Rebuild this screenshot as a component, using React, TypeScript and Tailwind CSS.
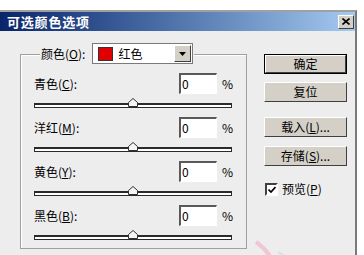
import React from 'react';

const font = { fontFamily: '"Noto Sans CJK SC", "Liberation Sans", sans-serif' };

const Thumb = () => (
  <svg width="10" height="9" viewBox="0 0 10 9" className="absolute left-[94px] top-0">
    <path d="M5 0.5 L9.5 4.5 L9.5 8.5 L0.5 8.5 L0.5 4.5 Z" fill="#f4f4f4" stroke="#303030" strokeWidth="1" />
  </svg>
);

const Row = ({ label, mnemonic }: { label: string; mnemonic: string }) => (
  <div className="flex flex-col">
    <div className="flex h-[21px] items-center">
      <span className="w-[145px] text-[12px] text-black">
        {label}(<span className="underline">{mnemonic}</span>):
      </span>
      <div className="flex h-[21px] w-[38px] items-center border-t-2 border-l-2 border-t-[#5a5a5a] border-l-[#5a5a5a] border-b border-r border-b-white border-r-white bg-white pl-[1px] text-[12px] leading-none">
        0
      </div>
      <span className="ml-[5px] text-[12px]">%</span>
    </div>
    <div className="relative mt-[4px] h-[10px] w-[198px]">
      <div className="absolute left-0 right-0 top-[5px] h-[5px] border border-t-2 border-[#2a2a2a] bg-white" />
      <Thumb />
    </div>
  </div>
);

const Btn = ({ children, def }: { children: React.ReactNode; def?: boolean }) => (
  <div className={def ? 'border border-black' : ''}>
    <div
      className={`flex items-center justify-center border border-t-white border-l-white border-b-[#404040] border-r-[#404040] bg-[#d4d0c8] text-[12px] text-black ${
        def ? 'h-[18px] w-[81px]' : 'h-[20px] w-[83px]'
      }`}
    >
      {children}
    </div>
  </div>
);

export default function App() {
  return (
    <div className="relative h-[255px] w-[364px] overflow-hidden bg-white pt-[10px]" style={font}>
      <div className="w-[357px] border-t-2 border-[#a0a0a0] border-r-2 border-r-[#7a7a7a]">
        <div className="flex h-[19px] items-center justify-between bg-gradient-to-r from-[#0a246a] to-[#a6caf0] pl-[7px] pr-[1px]">
          <span className="text-[13px] font-bold tracking-[0.8px] text-white">可选颜色选项</span>
          <div className="flex h-[14px] w-[16px] items-center justify-center border border-t-white border-l-white border-b-[#404040] border-r-[#404040] bg-[#d4d0c8]">
            <svg width="8" height="7" viewBox="0 0 8 7">
              <path d="M0.5 0.5 L7.5 6.5 M7.5 0.5 L0.5 6.5" stroke="#000" strokeWidth="1.6" />
            </svg>
          </div>
        </div>
        <div className="flex h-[226px] bg-[#ededed]">
          <div className="ml-[20px] mt-[23px] flex h-[195px] w-[227px] flex-col border border-[#a0a0a0] px-[13px] shadow-[inset_1px_1px_0_#ffffff]">
            <div className="-mt-[12px] ml-[6px] flex w-fit items-center bg-[#ededed] px-[1px]">
              <span className="mr-[7px] text-[12px]">
                颜色(<span className="underline">O</span>):
              </span>
              <div className="flex h-[21px] w-[101px] items-center border border-[#7a7a7a] bg-white p-[1px]">
                <div className="ml-[4px] h-[14px] w-[15px] border border-[#333] bg-[#e00000]" />
                <span className="ml-[5px] flex-1 text-[12px]">红色</span>
                <div className="flex h-[17px] w-[17px] items-center justify-center border border-t-white border-l-white border-b-[#404040] border-r-[#404040] bg-[#d4d0c8]">
                  <svg width="7" height="4" viewBox="0 0 7 4">
                    <path d="M0 0 L7 0 L3.5 4 Z" fill="#000" />
                  </svg>
                </div>
              </div>
            </div>
            <div className="mt-[9px] flex flex-col gap-[9px]">
              <Row label="青色" mnemonic="C" />
              <Row label="洋红" mnemonic="M" />
              <Row label="黄色" mnemonic="Y" />
              <Row label="黑色" mnemonic="B" />
            </div>
          </div>
          <div className="ml-[17px] mt-[23px] flex flex-col">
            <Btn def>确定</Btn>
            <div className="mt-[8px]">
              <Btn>复位</Btn>
            </div>
            <div className="mt-[15px]">
              <Btn>
                载入(<span className="underline">L</span>)...
              </Btn>
            </div>
            <div className="mt-[9px]">
              <Btn>
                存储(<span className="underline">S</span>)...
              </Btn>
            </div>
            <div className="ml-[1px] mt-[14px] flex items-center">
              <div className="flex h-[13px] w-[13px] items-center justify-center border-2 border-t-[#404040] border-l-[#404040] border-b-white border-r-white bg-white">
                <svg width="8" height="7" viewBox="0 0 8 7">
                  <path d="M0.5 3.5 L3 6 L7.5 1" stroke="#000" strokeWidth="1.7" fill="none" />
                </svg>
              </div>
              <span className="ml-[4px] text-[12px]">
                预览(<span className="underline">P</span>)
              </span>
            </div>
          </div>
        </div>
      </div>
      <svg width="60" height="20" viewBox="0 0 60 20" className="absolute left-[252px] top-[240px]">
        <path d="M4 2 C 10 6, 16 12, 20 20" stroke="#f0c6d4" strokeWidth="4" fill="none" />
        <path d="M26 12 C 30 14, 34 17, 36 20" stroke="#cfe4ee" strokeWidth="2" fill="none" />
      </svg>
    </div>
  );
}
